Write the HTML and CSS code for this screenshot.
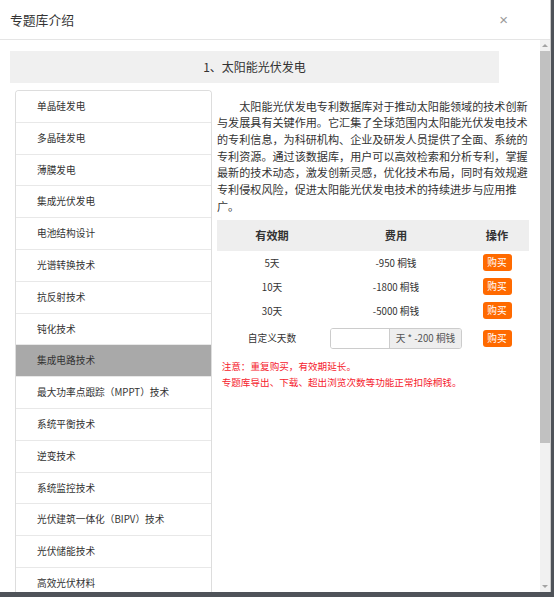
FILE: index.html
```html
<!DOCTYPE html>
<html lang="zh-CN">
<head>
<meta charset="utf-8">
<title>专题库介绍</title>
<link rel="stylesheet" href="styles.css">
</head>
<body>
<div class="modal">
  <div class="modal-header">
    <div class="modal-title">专题库介绍</div>
    <div class="modal-close">×</div>
  </div>
  <div class="modal-main">
    <div class="modal-body">
      <div class="section-title">1、太阳能光伏发电</div>
      <div class="content">
        <ul class="topic-list">
          <li class="topic-item">单晶硅发电</li>
          <li class="topic-item">多晶硅发电</li>
          <li class="topic-item">薄膜发电</li>
          <li class="topic-item">集成光伏发电</li>
          <li class="topic-item">电池结构设计</li>
          <li class="topic-item">光谱转换技术</li>
          <li class="topic-item">抗反射技术</li>
          <li class="topic-item">钝化技术</li>
          <li class="topic-item active">集成电路技术</li>
          <li class="topic-item">最大功率点跟踪（MPPT）技术</li>
          <li class="topic-item">系统平衡技术</li>
          <li class="topic-item">逆变技术</li>
          <li class="topic-item">系统监控技术</li>
          <li class="topic-item">光伏建筑一体化（BIPV）技术</li>
          <li class="topic-item">光伏储能技术</li>
          <li class="topic-item">高效光伏材料</li>
        </ul>
        <div class="detail">
          <p class="intro">太阳能光伏发电专利数据库对于推动太阳能领域的技术创新与发展具有关键作用。它汇集了全球范围内太阳能光伏发电技术的专利信息，为科研机构、企业及研发人员提供了全面、系统的专利资源。通过该数据库，用户可以高效检索和分析专利，掌握最新的技术动态，激发创新灵感，优化技术布局，同时有效规避专利侵权风险，促进太阳能光伏发电技术的持续进步与应用推广。</p>
          <div class="price-table">
            <div class="row head">
              <div class="cell c1">有效期</div>
              <div class="cell c2">费用</div>
              <div class="cell c3">操作</div>
            </div>
            <div class="row">
              <div class="cell c1">5天</div>
              <div class="cell c2">-950 桐钱</div>
              <div class="cell c3"><span class="buy">购买</span></div>
            </div>
            <div class="row">
              <div class="cell c1">10天</div>
              <div class="cell c2">-1800 桐钱</div>
              <div class="cell c3"><span class="buy">购买</span></div>
            </div>
            <div class="row">
              <div class="cell c1">30天</div>
              <div class="cell c2">-5000 桐钱</div>
              <div class="cell c3"><span class="buy">购买</span></div>
            </div>
            <div class="row custom">
              <div class="cell c1">自定义天数</div>
              <div class="cell c2">
                <div class="input-group">
                  <span class="input"></span>
                  <span class="addon">天 * -200 桐钱</span>
                </div>
              </div>
              <div class="cell c3"><span class="buy">购买</span></div>
            </div>
          </div>
          <div class="notes">
            <div>注意：重复购买，有效期延长。</div>
            <div>专题库导出、下载、超出浏览次数等功能正常扣除桐钱。</div>
          </div>
        </div>
      </div>
    </div>
    <div class="scrollbar">
      <div class="sb-btn"><span class="arrow-up"></span></div>
      <div class="sb-thumb"></div>
      <div class="sb-track"></div>
      <div class="sb-btn"><span class="arrow-down"></span></div>
    </div>
  </div>
</div>
</body>
</html>
```

FILE: styles.css
```css
* { box-sizing: border-box; }
html, body {
  margin: 0;
  padding: 0;
}
body {
  width: 554px;
  height: 597px;
  overflow: hidden;
  background: #4f5359;
  font-family: "Noto Sans CJK SC", "Microsoft YaHei", sans-serif;
  color: #333;
}
.modal {
  width: 551px;
  height: 592px;
  background: #fff;
  display: flex;
  flex-direction: column;
  border-right: 1px solid #c9c9c9;
}
.modal-header {
  height: 40px;
  flex: none;
  border-bottom: 1px solid #e5e5e5;
  display: flex;
  align-items: center;
  justify-content: space-between;
  padding: 0 42px 0 10px;
}
.modal-title {
  font-size: 12.8px;
  color: #333;
  line-height: 18px;
}
.modal-close {
  font-family: "Liberation Sans", sans-serif;
  font-size: 15px;
  color: #999;
  line-height: 16px;
}
.modal-main {
  flex: 1;
  display: flex;
  overflow: hidden;
}
.modal-body {
  flex: 1;
  overflow: hidden;
  padding: 11px 0 0 10px;
}
.section-title {
  width: 489px;
  height: 32px;
  background: #f0f0f0;
  text-align: center;
  line-height: 32px;
  font-size: 12px;
  color: #333;
}
.content {
  display: flex;
  margin-top: 7px;
  align-items: flex-start;
}
.topic-list {
  list-style: none;
  margin: 0 0 0 5px;
  padding: 0;
  width: 197px;
  flex: none;
  border: 1px solid #ddd;
  border-radius: 4px 4px 0 0;
  border-bottom: none;
  overflow: hidden;
}
.topic-item {
  height: 31.8px;
  line-height: 30.8px;
  border-bottom: 1px solid #e8e8e8;
  padding-left: 21px;
  font-size: 9.7px;
  color: #333;
  background: #fff;
}
.topic-item.active {
  background: #a9a9a9;
}
.detail {
  width: 312px;
  margin-left: 5px;
  flex: none;
}
.intro {
  margin: 7.7px 0 0 0;
  font-size: 11.1px;
  line-height: 16.67px;
  text-indent: 2em;
  color: #333;
}
.price-table {
  margin-top: 5.5px;
  width: 312px;
}
.row {
  display: flex;
  height: 24px;
  align-items: center;
  font-size: 9.7px;
  color: #333;
}
.row.head {
  height: 30.7px;
  background: #eee;
  font-size: 11.2px;
  font-weight: bold;
}
.row.custom {
  height: 31px;
}
.cell {
  text-align: center;
  display: flex;
  justify-content: center;
  align-items: center;
}
.c1 { width: 110px; }
.c2 { width: 138px; }
.c3 { width: 64px; }
.buy {
  display: inline-block;
  width: 29px;
  height: 17px;
  line-height: 17px;
  border-radius: 3px;
  background: #ff6a00;
  color: #fff;
  font-size: 9.7px;
  text-align: center;
}
.input-group {
  display: flex;
  width: 132px;
  height: 21px;
  border: 1px solid #ccc;
  border-radius: 3px;
  overflow: hidden;
}
.input {
  width: 59px;
  background: #fff;
  border-right: 1px solid #ccc;
}
.addon {
  flex: 1;
  background: #eee;
  color: #555;
  font-size: 9.7px;
  line-height: 19px;
  text-align: center;
}
.notes {
  margin-top: 4px;
  padding-left: 4.7px;
  font-size: 9.6px;
  line-height: 16px;
  color: #f5222d;
}
.scrollbar {
  width: 10px;
  flex: none;
  background: #f1f1f1;
  display: flex;
  flex-direction: column;
}
.sb-btn {
  height: 11px;
  display: flex;
  align-items: center;
  justify-content: center;
}
.sb-thumb {
  height: 392px;
  background: #c1c1c1;
}
.sb-track {
  flex: 1;
}
.arrow-up {
  width: 0;
  height: 0;
  border-left: 3px solid transparent;
  border-right: 3px solid transparent;
  border-bottom: 3px solid #a3a3a3;
}
.arrow-down {
  width: 0;
  height: 0;
  border-left: 3px solid transparent;
  border-right: 3px solid transparent;
  border-top: 3px solid #a3a3a3;
}
```
